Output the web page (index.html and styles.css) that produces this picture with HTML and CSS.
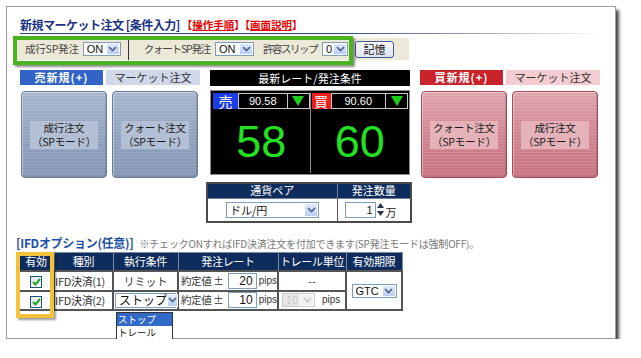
FILE: index.html
```html
<!DOCTYPE html>
<html lang="ja">
<head>
<meta charset="utf-8">
<title>新規マーケット注文</title>
<link rel="stylesheet" href="styles.css">
</head>
<body>
<div class="panel">
  <div class="title">
    <span class="title-main">新規マーケット注文 [条件入力]</span>
    <span class="title-links">【<u>操作手順</u>】【<u>画面説明</u>】</span>
  </div>
  <div class="rule"></div>

  <div class="toolbar">
    <span class="tb-label l1">成行SP発注</span>
    <span class="sel s-on">ON<span class="arr"><svg width="9" height="6" viewBox="0 0 9 6"><polyline points="1,1 4.5,4.5 8,1" fill="none" stroke="#4a5f8a" stroke-width="1.6"/></svg></span></span>
    <span class="tb-div"></span>
    <span class="tb-label l2">クォートSP発注</span>
    <span class="sel s-on2">ON<span class="arr"><svg width="9" height="6" viewBox="0 0 9 6"><polyline points="1,1 4.5,4.5 8,1" fill="none" stroke="#4a5f8a" stroke-width="1.6"/></svg></span></span>
    <span class="tb-label l3">許容スリップ</span>
    <span class="sel s-zero">0<span class="arr"><svg width="9" height="6" viewBox="0 0 9 6"><polyline points="1,1 4.5,4.5 8,1" fill="none" stroke="#4a5f8a" stroke-width="1.6"/></svg></span></span>
    <span class="btn-save">記憶</span>
  </div>
  <div class="mark-green"></div>

  <div class="main">
    <div class="side sell">
      <div class="side-head"><span class="tag">売新規(+)</span><span class="sub">マーケット注文</span></div>
      <div class="obtns">
        <div class="obtn"><span class="olabel">成行注文<br>（SPモード）</span></div>
        <div class="obtn"><span class="olabel">クォート注文<br>（SPモード）</span></div>
      </div>
    </div>

    <div class="center">
      <div class="rate-head">最新レート/発注条件</div>
      <div class="rate">
        <div class="half">
          <div class="rtop"><span class="kind k-sell">売</span><span class="price">90.58</span><span class="tri"><svg width="12" height="10" viewBox="0 0 12 10"><polygon points="0,0 12,0 6,10" fill="#1ccf1c"/></svg></span></div>
          <div class="big">58</div>
        </div>
        <div class="half">
          <div class="rtop"><span class="kind k-buy">買</span><span class="price">90.60</span><span class="tri"><svg width="12" height="10" viewBox="0 0 12 10"><polygon points="0,0 12,0 6,10" fill="#1ccf1c"/></svg></span></div>
          <div class="big">60</div>
        </div>
      </div>
      <table class="ccy">
        <tr><th class="c1">通貨ペア</th><th class="c2">発注数量</th></tr>
        <tr>
          <td><span class="sel s-ccy">ドル/円<span class="arr"><svg width="9" height="6" viewBox="0 0 9 6"><polyline points="1,1 4.5,4.5 8,1" fill="none" stroke="#4a5f8a" stroke-width="1.6"/></svg></span></span></td>
          <td><span class="spin"><span class="spin-in">1</span><span class="spin-btn"><svg width="7" height="13" viewBox="0 0 7 13"><polygon points="0,5 7,5 3.5,0" fill="#2a3550"/><polygon points="0,8 7,8 3.5,13" fill="#2a3550"/></svg></span><span class="man">万</span></span></td>
        </tr>
      </table>
    </div>

    <div class="side buy">
      <div class="side-head"><span class="tag">買新規(+)</span><span class="sub">マーケット注文</span></div>
      <div class="obtns">
        <div class="obtn"><span class="olabel">クォート注文<br>（SPモード）</span></div>
        <div class="obtn"><span class="olabel">成行注文<br>（SPモード）</span></div>
      </div>
    </div>
  </div>

  <div class="ifd-head"><span class="ifd-title">[IFDオプション(任意)]</span><span class="ifd-note">※チェックONすればIFD決済注文を付加できます(SP発注モードは強制OFF)。</span></div>

  <table class="ifd">
    <colgroup><col class="w1"><col class="w2"><col class="w3"><col class="w4"><col class="w5"><col class="w6"></colgroup>
    <tr class="hr"><th>有効</th><th>種別</th><th>執行条件</th><th>発注レート</th><th>トレール単位</th><th>有効期限</th></tr>
    <tr class="r1">
      <td><span class="chk"><svg width="9" height="8" viewBox="0 0 9 8"><polyline points="1,4 3.5,6.5 8,1" fill="none" stroke="#22a52a" stroke-width="2"/></svg></span></td>
      <td class="kind-cell">IFD決済(1)</td>
      <td>リミット</td>
      <td><div class="rc"><span class="yak">約定値 ±</span><span class="num">20</span><span class="pips">pips</span></div></td>
      <td>--</td>
      <td rowspan="2"><span class="sel s-gtc">GTC<span class="arr"><svg width="9" height="6" viewBox="0 0 9 6"><polyline points="1,1 4.5,4.5 8,1" fill="none" stroke="#4a5f8a" stroke-width="1.6"/></svg></span></span></td>
    </tr>
    <tr class="r2">
      <td><span class="chk"><svg width="9" height="8" viewBox="0 0 9 8"><polyline points="1,4 3.5,6.5 8,1" fill="none" stroke="#22a52a" stroke-width="2"/></svg></span></td>
      <td class="kind-cell">IFD決済(2)</td>
      <td><span class="sel s-stop">ストップ<span class="arr"><svg width="9" height="6" viewBox="0 0 9 6"><polyline points="1,1 4.5,4.5 8,1" fill="none" stroke="#4a5f8a" stroke-width="1.6"/></svg></span></span></td>
      <td><div class="rc"><span class="yak">約定値 ±</span><span class="num">10</span><span class="pips">pips</span></div></td>
      <td><div class="tc"><span class="sel s-dis">10<span class="arr"><svg width="9" height="6" viewBox="0 0 9 6"><polyline points="1,1 4.5,4.5 8,1" fill="none" stroke="#c8c8c8" stroke-width="1.6"/></svg></span></span><span class="pips">pips</span></div></td>
    </tr>
  </table>

  <div class="dropdown"><div class="opt on">ストップ</div><div class="opt">トレール</div></div>
  <div class="mark-yellow"></div>
</div>
</body>
</html>
```

FILE: styles.css
```css
* { box-sizing: border-box; }
body {
  margin: 0;
  background: #fff;
  font-family: "Noto Sans CJK JP", "Liberation Sans", sans-serif;
  font-size: 11px;
  color: #222;
}
.panel {
  position: relative;
  margin: 6px 0 0 6px;
  width: 610px;
  height: 333px;
  border: 1px solid #9c9c9c;
  box-shadow: 3px 4px 3px #4a4a4a;
  background: #fff;
}
.title {
  margin: 9px 0 0 13px;
  height: 17px;
  display: flex;
  align-items: center;
  white-space: nowrap;
}
.title-main {
  color: #1b3383;
  font-weight: bold;
  font-size: 12px;
  letter-spacing: -0.5px;
}
.title-links {
  color: #e60000;
  font-weight: bold;
  font-size: 10.5px;
  margin-left: 2px;
}
.rule {
  margin-left: 13px;
  width: 582px;
  height: 1px;
  background: linear-gradient(90deg, #2c4870 0%, #2c4870 55%, rgba(44,72,112,0) 100%);
}
.toolbar {
  margin: 4px 0 0 10px;
  width: 392px;
  height: 22px;
  background: #ece9d8;
  display: flex;
  align-items: center;
  color: #444;
  white-space: nowrap;
}
.toolbar > * { flex-shrink: 0; }
.tb-label { font-size: 10.5px; line-height: 14px; }
.l1 { margin-left: 8px; letter-spacing: -0.2px; }
.l2 { margin-left: 15px; letter-spacing: -1.2px; }
.l3 { margin-left: 9px; letter-spacing: -1.5px; }
.tb-div { width: 1px; height: 22px; background: #333; margin-left: 7px; }
.sel {
  display: inline-flex;
  align-items: center;
  justify-content: space-between;
  height: 14px;
  border: 1px solid #7f9db9;
  background: #fff;
  font-family: "Liberation Sans", sans-serif;
  font-size: 11px;
  line-height: 12px;
  color: #111;
  padding-left: 3px;
  flex-shrink: 0;
}
.sel .arr {
  width: 14px;
  height: 12px;
  display: flex;
  align-items: center;
  justify-content: center;
  background: linear-gradient(#dfe8fb, #b9cdf3);
  border: 1px solid #fff;
}
.s-on { width: 38px; margin-left: 4px; }
.s-on2 { width: 39px; margin-left: 5px; }
.s-zero { width: 26px; margin-left: 5px; }
.btn-save {
  margin-left: 7px;
  width: 39px;
  height: 17px;
  border: 1px solid #3f5d9d;
  border-radius: 3px;
  background: linear-gradient(#fbfbfd, #dfe3ef);
  color: #111;
  font-size: 11px;
  line-height: 15px;
  text-align: center;
}
.mark-green {
  position: absolute;
  left: 6px;
  top: 29px;
  width: 340px;
  height: 29px;
  border: 4px solid #4ab51f;
  box-shadow: 2px 2px 2px rgba(0,0,0,0.45);
}

.main {
  margin: 10px 0 0 13px;
  display: flex;
  height: 152px;
}
.side { width: 181px; }
.side-head { display: flex; height: 15px; }
.tag {
  width: 83px;
  color: #fff;
  font-weight: bold;
  font-size: 11px;
  line-height: 15px;
  text-align: center;
  letter-spacing: 1px;
}
.sub {
  width: 94px;
  margin-left: 3px;
  font-size: 11px;
  line-height: 15px;
  text-align: center;
  color: #333;
}
.sell .tag { background: #3164c4; }
.sell .sub { background: #d0d8ea; }
.buy .tag { background: #c9232c; }
.buy .sub { background: #f3cdd2; }
.obtns { display: flex; gap: 5px; margin: 6px 0 0 1px; }
.obtn {
  width: 86px;
  height: 87px;
  border-radius: 4px;
  display: flex;
  align-items: center;
  justify-content: center;
}
.olabel {
  font-size: 10.5px;
  line-height: 14px;
  text-align: center;
  padding: 0 2px;
  color: #1a1a1a;
  white-space: nowrap;
  letter-spacing: -0.2px;
}
.sell .obtn {
  border: 1px solid #6b7e9d;
  background:
    repeating-linear-gradient(180deg, rgba(255,255,255,0.13) 0 1px, rgba(255,255,255,0) 1px 3px),
    linear-gradient(#a7b6cd, #90a2bf 50%, #8597b5);
  box-shadow: inset 1px 1px 0 rgba(255,255,255,0.35), inset -1px -1px 0 rgba(0,0,0,0.12);
}
.sell .olabel { background: #b2bfd4; }
.buy .obtn {
  border: 1px solid #a34b59;
  background:
    repeating-linear-gradient(180deg, rgba(255,255,255,0.13) 0 1px, rgba(255,255,255,0) 1px 3px),
    linear-gradient(#e0a3ac, #d08590 50%, #c7737f);
  box-shadow: inset 1px 1px 0 rgba(255,255,255,0.35), inset -1px -1px 0 rgba(0,0,0,0.12);
}
.buy .olabel { background: #e5b2b9; }
.side.buy { margin-left: 10px; }

.center { width: 200px; margin-left: 9px; }
.rate-head {
  height: 16px;
  background: #000;
  color: #fff;
  font-size: 11px;
  line-height: 16px;
  text-align: center;
}
.rate {
  margin-top: 4px;
  height: 85px;
  background: #000;
  border: 1px solid #8a8a8a;
  padding: 2px 1px 1px 2px;
  display: flex;
}
.half { flex: 1; display: flex; flex-direction: column; }
.half + .half { border-left: 1px solid #8a8a8a; padding-left: 1px; }
.rtop { display: flex; height: 16px; }
.kind {
  color: #fff;
  font-size: 14px;
  line-height: 16px;
  text-align: center;
}
.k-sell { width: 25px; background: #1d3de4; }
.k-buy { width: 19px; background: #f01d1d; }
.price {
  flex: 1;
  border: 1px solid #c8c8c8;
  color: #fff;
  font-family: "Liberation Sans", sans-serif;
  font-size: 11px;
  line-height: 14px;
  text-align: center;
}
.tri {
  width: 22px;
  border: 1px solid #c8c8c8;
  border-left: none;
  display: flex;
  align-items: center;
  justify-content: center;
}
.big {
  margin-top: 10px;
  font-family: "Liberation Sans", sans-serif;
  font-size: 45px;
  line-height: 45px;
  color: #22e022;
  text-align: center;
}
.ccy {
  margin: 7px 0 0 -4px;
  width: 206px;
  border-collapse: collapse;
  border: 2px solid #4a4a4a;
}
.ccy th {
  height: 15px;
  background: #0f2d5c;
  color: #fff;
  font-weight: normal;
  font-size: 11px;
  line-height: 13px;
  padding: 0;
  border: 1px solid #6f7f99;
}
.ccy .c1 { width: 130px; }
.ccy td {
  height: 24px;
  padding: 0;
  border: 1px solid #555;
  background: #fff;
}
.s-ccy { width: 93px; margin-left: 18px; height: 16px; font-family: "Noto Sans CJK JP", sans-serif; }
.s-ccy .arr { height: 14px; }
.spin { display: flex; align-items: center; margin-left: 7px; }
.spin-in {
  width: 31px;
  height: 16px;
  border: 1px solid #7f9db9;
  text-align: right;
  padding-right: 2px;
  font-family: "Liberation Sans", sans-serif;
  font-size: 11px;
  line-height: 14px;
}
.spin-btn { display: flex; margin-left: 1px; }
.man { margin-left: 2px; font-size: 11px; line-height: 14px; margin-top: 4px; }

.ifd-head {
  margin: 14px 0 0 9px;
  height: 14px;
  display: flex;
  align-items: baseline;
  white-space: nowrap;
}
.ifd-title {
  color: #1d4fa5;
  font-weight: bold;
  font-size: 12px;
  letter-spacing: -0.3px;
  line-height: 14px;
}
.ifd-note {
  margin-left: 6px;
  color: #777;
  font-size: 10px;
  letter-spacing: -0.2px;
  line-height: 14px;
}
.ifd {
  margin: 2px 0 0 10px;
  width: 384px;
  table-layout: fixed;
  border-collapse: collapse;
  border: 1px solid #444;
}
.ifd .w1 { width: 36px; }
.ifd .w2 { width: 59px; }
.ifd .w3 { width: 65px; }
.ifd .w4 { width: 100px; }
.ifd .w5 { width: 68px; }
.ifd .w6 { width: 56px; }
.ifd th {
  height: 18px;
  background: #0e2d5c;
  color: #fff;
  font-weight: normal;
  font-size: 11px;
  line-height: 14px;
  padding: 0;
  border: 1px solid #7b8aa3;
  white-space: nowrap;
  letter-spacing: -0.3px;
}
.ifd td {
  padding: 0;
  border: 2px solid #555;
  text-align: center;
  font-size: 11px;
  line-height: 14px;
  color: #333;
  white-space: nowrap;
}
.ifd .r1 td { height: 20px; }
.ifd .r2 td { height: 19px; }
.ifd td.kind-cell { text-align: left; padding-left: 0; letter-spacing: -0.3px; }
.chk {
  display: inline-flex;
  align-items: center;
  justify-content: center;
  width: 12px;
  height: 12px;
  border: 1px solid #1c5180;
  background: linear-gradient(135deg, #e4e4df, #fff);
  vertical-align: middle;
}
.rc, .tc { display: flex; align-items: center; }
.yak { margin-left: 2px; width: 38px; font-size: 10.5px; letter-spacing: -0.4px; }
.num {
  width: 30px;
  height: 16px;
  margin-left: 9px;
  border: 1px solid #7f9db9;
  text-align: right;
  padding-right: 3px;
  font-family: "Liberation Sans", sans-serif;
  font-size: 12px;
  line-height: 14px;
  color: #111;
}
.pips {
  margin-left: 2px;
  font-family: "Liberation Sans", sans-serif;
  font-size: 10px;
  color: #333;
}
.s-gtc { width: 45px; height: 14px; }
.s-stop { width: 61px; height: 15px; font-family: "Noto Sans CJK JP", sans-serif; font-size: 12px; color: #111; }
.s-stop .arr { height: 13px; }
.s-dis {
  width: 33px;
  margin-left: 3px;
  border-color: #c9c9c9;
  background: #e7e7e7;
  color: #c8c8c8;
}
.s-dis .arr { background: #f0f0f0; }
.s-dis + .pips { margin-left: 7px; }
.dropdown {
  position: absolute;
  left: 109px;
  top: 305px;
  width: 57px;
  border: 1px solid #333;
  background: #fff;
}
.opt {
  height: 13px;
  font-size: 9.5px;
  line-height: 13px;
  padding-left: 1px;
  color: #111;
}
.opt.on { background: #3169c6; color: #fff; }
.mark-yellow {
  position: absolute;
  left: 9px;
  top: 245px;
  width: 38px;
  height: 66px;
  border: 4px solid #f3c23a;
  box-shadow: 2px 2px 2px rgba(0,0,0,0.4);
}
```
